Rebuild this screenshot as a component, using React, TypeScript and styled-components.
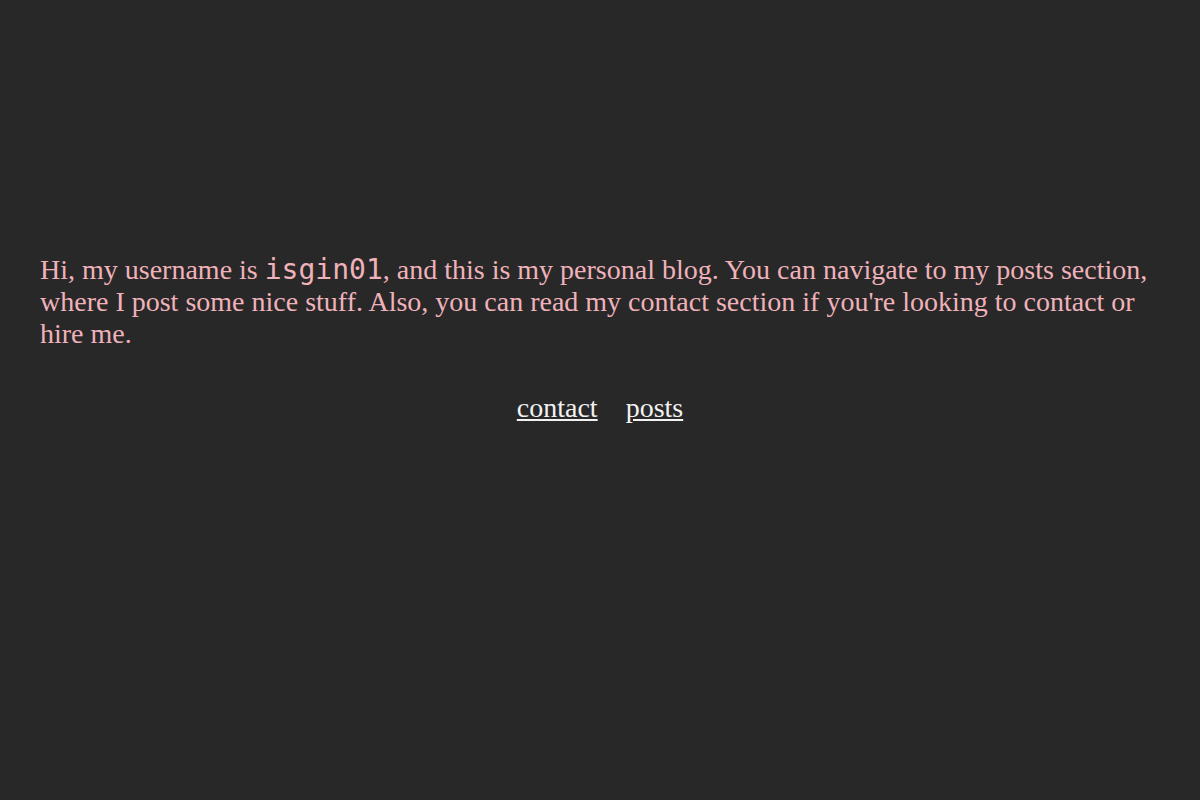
import styled, { createGlobalStyle } from "styled-components";

const GlobalStyle = createGlobalStyle`
    html, body {
        margin: 0;
        padding: 0;
        background: #282828;
    }
    body {
        font-family: "Liberation Serif", "Times New Roman", serif;
        font-size: 28px;
        color: #f0b2ba;
    }
`;

const Page = styled.main`
    min-height: 100vh;
    box-sizing: border-box;
    padding: 254px 40px 0;
`;

const Intro = styled.p`
    margin: 0;
    line-height: normal;
`;

const Handle = styled.code`
    font-family: "DejaVu Sans Mono", monospace;
    font-size: 28px;
    line-height: 1;
`;

const Nav = styled.nav`
    display: flex;
    justify-content: center;
    gap: 28px;
    margin-top: 41.5px;
    line-height: normal;
`;

const NavLink = styled.a`
    color: #f2f2f2;
    text-decoration: underline;
`;

export default function App() {
    return (
        <>
            <GlobalStyle />
            <Page>
                <Intro>
                    Hi, my username is <Handle>isgin01</Handle>, and this is my personal blog. You can navigate to
                    my posts section, where I post some nice stuff. Also, you can read my contact section if
                    you're looking to contact or hire me.
                </Intro>
                <Nav>
                    <NavLink href="#contact">contact</NavLink>
                    <NavLink href="#posts">posts</NavLink>
                </Nav>
            </Page>
        </>
    );
}
